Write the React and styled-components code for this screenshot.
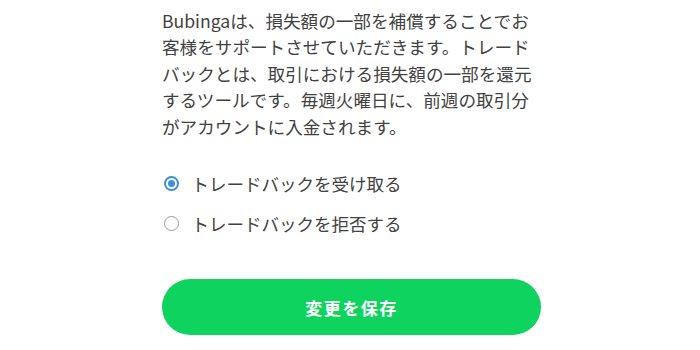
import React, { useState } from 'react'
import styled, { createGlobalStyle } from 'styled-components'

const GlobalStyle = createGlobalStyle`
  body {
    margin: 0;
    background: #fff;
    font-family: "Noto Sans CJK JP", "Noto Sans", sans-serif;
  }
`

const Page = styled.div`
  display: flex;
  justify-content: center;
  padding: 8px 0 0 3px;
`

const Panel = styled.div`
  width: 379px;
  display: flex;
  flex-direction: column;
`

const Intro = styled.p`
  margin: 0;
  font-size: 17.6px;
  line-height: 26.4px;
  color: #424242;
`

const Options = styled.div`
  display: flex;
  flex-direction: column;
  gap: 14px;
  margin-top: 30px;
`

const Option = styled.label`
  display: flex;
  align-items: center;
  gap: 13px;
  height: 26px;
  font-size: 17.5px;
  color: #424242;
  cursor: pointer;
`

const Radio = styled.span`
  box-sizing: border-box;
  width: 15px;
  height: 15px;
  margin-left: 1.5px;
  border-radius: 50%;
  border: ${p => (p.$checked ? '2px solid #3a8fdf' : '1px solid #9a9a9a')};
  display: flex;
  align-items: center;
  justify-content: center;
  background: #fff;

  &::after {
    content: '';
    width: 7px;
    height: 7px;
    border-radius: 50%;
    background: ${p => (p.$checked ? '#3a8fdf' : 'transparent')};
  }
`

const SaveButton = styled.button`
  margin-top: 43px;
  height: 56px;
  border: none;
  border-radius: 28px;
  background: #0fd35f;
  color: #fff;
  font-family: "Noto Sans CJK JP", sans-serif;
  font-size: 17px;
  font-weight: 700;
  letter-spacing: 1.5px;
  cursor: pointer;
`

const App = () => {
  const [choice, setChoice] = useState('accept')

  return (
    <>
      <GlobalStyle />
      <Page>
        <Panel>
          <Intro>
            Bubingaは、損失額の一部を補償することでお客様をサポートさせていただきます。トレードバックとは、取引における損失額の一部を還元するツールです。毎週火曜日に、前週の取引分がアカウントに入金されます。
          </Intro>
          <Options>
            <Option onClick={() => setChoice('accept')}>
              <Radio $checked={choice === 'accept'} />
              トレードバックを受け取る
            </Option>
            <Option onClick={() => setChoice('reject')}>
              <Radio $checked={choice === 'reject'} />
              トレードバックを拒否する
            </Option>
          </Options>
          <SaveButton>変更を保存</SaveButton>
        </Panel>
      </Page>
    </>
  )
}

export default App
